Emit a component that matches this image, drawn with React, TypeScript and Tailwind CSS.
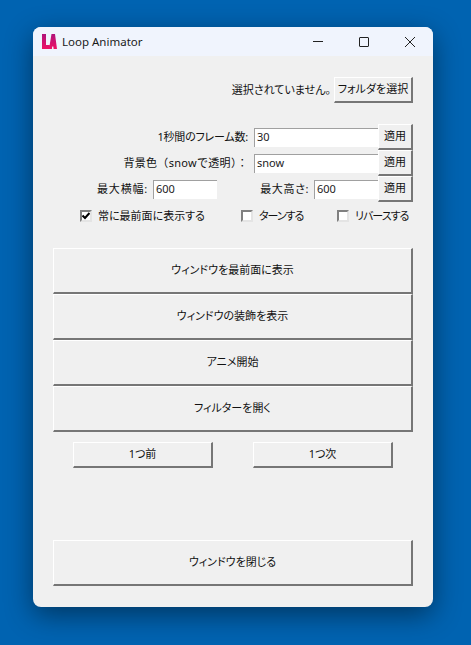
import type { ReactNode } from "react";

const font = "font-['Noto_Sans','Noto_Sans_CJK_JP',sans-serif] [font-feature-settings:'palt']";
const label = "whitespace-nowrap text-[11px] text-[#111]";
const raised =
  "flex items-center justify-center whitespace-nowrap border border-t-white border-l-white border-r-[#767676] border-b-[#767676] border-b-2 border-r-2 bg-[#f0f0f0] text-[11px] text-[#111]";

function TkButton({ className, children }: { className: string; children: ReactNode }) {
  return <div className={`${raised} ${className}`}>{children}</div>;
}

function Field({ value, className }: { value: string; className: string }) {
  return (
    <div
      className={`flex h-[19px] shrink-0 items-center border-t border-l border-t-[#a0a0a0] border-l-[#a0a0a0] bg-white pl-0.5 text-[11px] text-[#222] ${className}`}
    >
      {value}
    </div>
  );
}

function Check({ text, checked, className }: { text: string; checked?: boolean; className: string }) {
  return (
    <div className={`flex items-center ${label} ${className}`}>
      <div className="mr-[6px] flex h-[12px] w-[12px] shrink-0 items-center justify-center border-2 border-t-[#808080] border-l-[#808080] border-r-[#e4e4e4] border-b-[#e4e4e4] bg-white">
        {checked && (
          <svg width="8" height="8" viewBox="0 0 8 8" className="shrink-0">
            <path d="M0.5 3.5 L3 6 L7.5 1" fill="none" stroke="#000" strokeWidth="2" />
          </svg>
        )}
      </div>
      {text}
    </div>
  );
}

function Logo() {
  return (
    <svg width="15" height="15" viewBox="0 0 15 15">
      <defs>
        <linearGradient id="la" x1="0" y1="0" x2="0" y2="1">
          <stop offset="0" stopColor="#b0127a" />
          <stop offset="1" stopColor="#ee1266" />
        </linearGradient>
      </defs>
      <path d="M0 0H4V11H7.5V15H0Z M9.5 0H13L15 15H11.6L11.3 12.6H10.2L9.9 15H7Z" fill="url(#la)" />
    </svg>
  );
}

export default function App() {
  return (
    <div className={`flex h-[645px] w-[471px] items-start overflow-hidden bg-[#0063b1] pl-[33px] pt-[27px] ${font}`}>
      <div className="flex h-[580px] w-[400px] flex-col overflow-hidden rounded-lg bg-[#f0f0f0] shadow-[0_8px_28px_rgba(0,0,0,0.45)]">
        <div className="flex h-[29px] shrink-0 items-center bg-[#f0f4fd] pl-[9px]">
          <Logo />
          <span className="ml-[5px] text-[11.5px] text-[#1a1a1a]">Loop Animator</span>
          <div className="ml-auto flex items-center">
            <div className="flex h-[29px] w-[46px] items-center justify-center">
              <div className="h-px w-[10px] bg-[#222]" />
            </div>
            <div className="flex h-[29px] w-[46px] items-center justify-center">
              <div className="h-[10px] w-[10px] rounded-[1px] border border-[#222]" />
            </div>
            <div className="flex h-[29px] w-[46px] items-center justify-center">
              <svg width="10" height="10" viewBox="0 0 10 10">
                <path d="M0 0L10 10M10 0L0 10" stroke="#222" strokeWidth="1" />
              </svg>
            </div>
          </div>
        </div>

        <div className="flex flex-1 flex-col px-5">
          <div className="mt-[21px] flex h-[26px] items-center justify-end">
            <span className={`mr-[3px] ${label}`}>選択されていません。</span>
            <TkButton className="h-[26px] w-[79px]">フォルダを選択</TkButton>
          </div>

          <div className="mt-[21px] flex h-[26px] items-center justify-end">
            <span className={`mr-[6px] tracking-[-0.2px] ${label}`}>1秒間のフレーム数:</span>
            <Field value="30" className="w-[124px]" />
            <TkButton className="h-[26px] w-[35px]">適用</TkButton>
          </div>
          <div className="flex h-[26px] items-center justify-end">
            <span className={`mr-[6px] tracking-[0.3px] [font-feature-settings:normal] ${label}`}>背景色（snowで透明）：</span>
            <Field value="snow" className="w-[124px]" />
            <TkButton className="h-[26px] w-[35px]">適用</TkButton>
          </div>
          <div className="flex h-[26px] items-center">
            <span className={`w-[100px] pr-[5px] text-right tracking-[0.8px] ${label}`}>最大横幅:</span>
            <Field value="600" className="w-[64px]" />
            <span className={`ml-auto mr-[5px] tracking-[0.6px] ${label}`}>最大高さ:</span>
            <Field value="600" className="w-[64px]" />
            <TkButton className="h-[26px] w-[35px]">適用</TkButton>
          </div>

          <div className="mt-[2px] flex h-[24px] items-center pl-[27px]">
            <Check text="常に最前面に表示する" checked className="w-[161px]" />
            <Check text="ターンする" className="w-[96px] tracking-[-1px]" />
            <Check text="リバースする" className="w-[76px] tracking-[-1px]" />
          </div>

          <div className="mt-[20px] flex flex-col">
            <TkButton className="h-[46px]">ウィンドウを最前面に表示</TkButton>
            <TkButton className="h-[46px]">ウィンドウの装飾を表示</TkButton>
            <TkButton className="h-[46px]">アニメ開始</TkButton>
            <TkButton className="h-[46px]">フィルターを開く</TkButton>
          </div>

          <div className="mt-[10px] flex justify-between px-5">
            <TkButton className="h-[26px] w-[140px]">1つ前</TkButton>
            <TkButton className="h-[26px] w-[140px]">1つ次</TkButton>
          </div>

          <TkButton className="mt-[72px] h-[46px]">ウィンドウを閉じる</TkButton>
        </div>
      </div>
    </div>
  );
}
